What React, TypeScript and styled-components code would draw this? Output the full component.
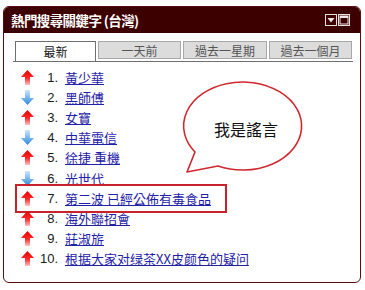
import React from 'react';
import styled, { createGlobalStyle } from 'styled-components';

const GlobalStyle = createGlobalStyle`
  html, body {
    margin: 0;
    padding: 0;
    background: #fff;
  }
  body {
    font-family: "Liberation Sans", "Noto Sans CJK TC", sans-serif;
  }
`;

const Panel = styled.div`
  position: relative;
  width: 356px;
  height: 275px;
  margin: 6px 0 0 3px;
  border: 1px solid #5a0d10;
  border-radius: 6px;
  overflow: hidden;
  background: #fff;
`;

const Header = styled.div`
  height: 26px;
  background: #3d0000;
  display: flex;
  align-items: center;
  justify-content: space-between;
  padding: 0 10px 0 7px;
`;

const Title = styled.div`
  color: #fff;
  font-family: "Noto Sans CJK TC", sans-serif;
  font-weight: 700;
  font-size: 13.5px;
  letter-spacing: -0.6px;
`;

const HeaderIcons = styled.div`
  display: flex;
  gap: 1px;
`;

const IconBox = styled.div`
  width: 10px;
  height: 10px;
  border: 1px solid #e8dede;
  display: flex;
  align-items: flex-start;
  justify-content: center;
`;

const TabStrip = styled.div`
  display: flex;
  gap: 2px;
  margin: 8px 7px 0 9px;
  padding-left: 2px;
  border-bottom: 1px solid #6f6f6f;
  height: 20px;
`;

const Tab = styled.div<{ $active?: boolean; $w: number }>`
  width: ${(p) => p.$w}px;
  height: ${(p) => (p.$active ? 20 : 18)}px;
  box-sizing: border-box;
  display: flex;
  align-items: center;
  justify-content: center;
  font-family: "Noto Sans CJK TC", sans-serif;
  font-size: 12px;
  color: ${(p) => (p.$active ? '#111' : '#555')};
  background: ${(p) => (p.$active ? '#fff' : '#dcdcdc')};
  border: 1px solid ${(p) => (p.$active ? '#6f6f6f' : '#a8a8a8')};
  border-bottom: ${(p) => (p.$active ? 'none' : '1px solid #a8a8a8')};
  margin-bottom: ${(p) => (p.$active ? '-1px' : '0')};
`;

const List = styled.ol`
  list-style: none;
  margin: 5px 0 0 0;
  padding: 0 0 0 16px;
`;

const Row = styled.li<{ $marked?: boolean }>`
  position: relative;
  height: 20.2px;
  display: flex;
  align-items: center;
  ${(p) =>
    p.$marked &&
    `
    &::after {
      content: '';
      position: absolute;
      left: -5px;
      top: -4px;
      width: 208px;
      height: 25px;
      border: 2px solid #c8232c;
    }
  `}
`;

const ArrowCell = styled.span`
  width: 14px;
  display: flex;
  justify-content: center;
`;

const Num = styled.span`
  width: 24px;
  text-align: right;
  font-size: 13px;
  color: #1a1a1a;
  margin-right: 7px;
`;

const Link = styled.a`
  font-family: "Noto Sans CJK TC", sans-serif;
  font-size: 13px;
  color: #1f22a8;
  text-decoration: underline;
  white-space: nowrap;
`;

const Bubble = styled.div`
  position: absolute;
  left: 176px;
  top: 73px;
  width: 135px;
  height: 100px;
`;

const BubbleText = styled.div`
  position: absolute;
  left: 7px;
  top: 5px;
  width: 118px;
  height: 88px;
  display: flex;
  align-items: center;
  justify-content: center;
  font-family: "Noto Sans CJK TC", sans-serif;
  font-size: 16px;
  font-weight: 400;
  color: #111;
`;

const UpArrow = () => (
  <svg width="13" height="15" viewBox="0 0 13 15">
    <defs>
      <linearGradient id="up" x1="0" y1="0" x2="0" y2="1">
        <stop offset="0" stopColor="#e60000" />
        <stop offset="0.55" stopColor="#ff2a2a" />
        <stop offset="1" stopColor="#ffc4c4" />
      </linearGradient>
    </defs>
    <path d="M6.5 0 L13 7 L9 7 L9 15 L4 15 L4 7 L0 7 Z" fill="url(#up)" />
  </svg>
);

const DownArrow = () => (
  <svg width="13" height="15" viewBox="0 0 13 15">
    <defs>
      <linearGradient id="down" x1="0" y1="0" x2="0" y2="1">
        <stop offset="0" stopColor="#cfe6fb" />
        <stop offset="0.5" stopColor="#7bb8ef" />
        <stop offset="1" stopColor="#2f86d8" />
      </linearGradient>
    </defs>
    <path d="M4 0 L9 0 L9 8 L13 8 L6.5 15 L0 8 L4 8 Z" fill="url(#down)" />
  </svg>
);

const items: { up: boolean; text: string }[] = [
  { up: true, text: '黃少華' },
  { up: false, text: '黑師傅' },
  { up: true, text: '女寶' },
  { up: false, text: '中華電信' },
  { up: true, text: '徐捷 重機' },
  { up: false, text: '光世代' },
  { up: true, text: '第二波 已經公佈有毒食品' },
  { up: true, text: '海外聯招會' },
  { up: true, text: '莊淑旂' },
  { up: true, text: '根据大家对绿茶XX皮颜色的疑问' },
];

const tabs = [
  { label: '最新', w: 81 },
  { label: '一天前', w: 83 },
  { label: '過去一星期', w: 84 },
  { label: '過去一個月', w: 83 },
];

export default function App() {
  return (
    <>
      <GlobalStyle />
      <Panel>
        <Header>
          <Title>熱門搜尋關鍵字 (台灣)</Title>
          <HeaderIcons>
            <IconBox>
              <svg width="10" height="10" viewBox="0 0 10 10">
                <path d="M1.5 3 L8.5 3 L5 7.5 Z" fill="#f0e8e8" />
              </svg>
            </IconBox>
            <IconBox>
              <svg width="10" height="10" viewBox="0 0 10 10">
                <rect x="1" y="1" width="8" height="2" fill="#f0e8e8" />
                <rect x="1" y="1" width="8" height="8" fill="none" stroke="#f0e8e8" strokeWidth="1" />
              </svg>
            </IconBox>
          </HeaderIcons>
        </Header>
        <TabStrip>
          {tabs.map((t, i) => (
            <Tab key={t.label} $active={i === 0} $w={t.w}>
              {t.label}
            </Tab>
          ))}
        </TabStrip>
        <List>
          {items.map((it, i) => (
            <Row key={i} $marked={i === 6}>
              <ArrowCell>{it.up ? <UpArrow /> : <DownArrow />}</ArrowCell>
              <Num>{i + 1}.</Num>
              <Link href="#">{it.text}</Link>
            </Row>
          ))}
        </List>
        <Bubble>
          <svg width="135" height="100" viewBox="0 0 135 100">
            <path
              d="M15 72 L7 92 L38 86 A59 44 0 1 0 15 72 Z"
              fill="#fff"
              stroke="#d0282f"
              strokeWidth="1.6"
              strokeLinejoin="round"
            />
          </svg>
          <BubbleText>我是謠言</BubbleText>
        </Bubble>
      </Panel>
    </>
  );
}
